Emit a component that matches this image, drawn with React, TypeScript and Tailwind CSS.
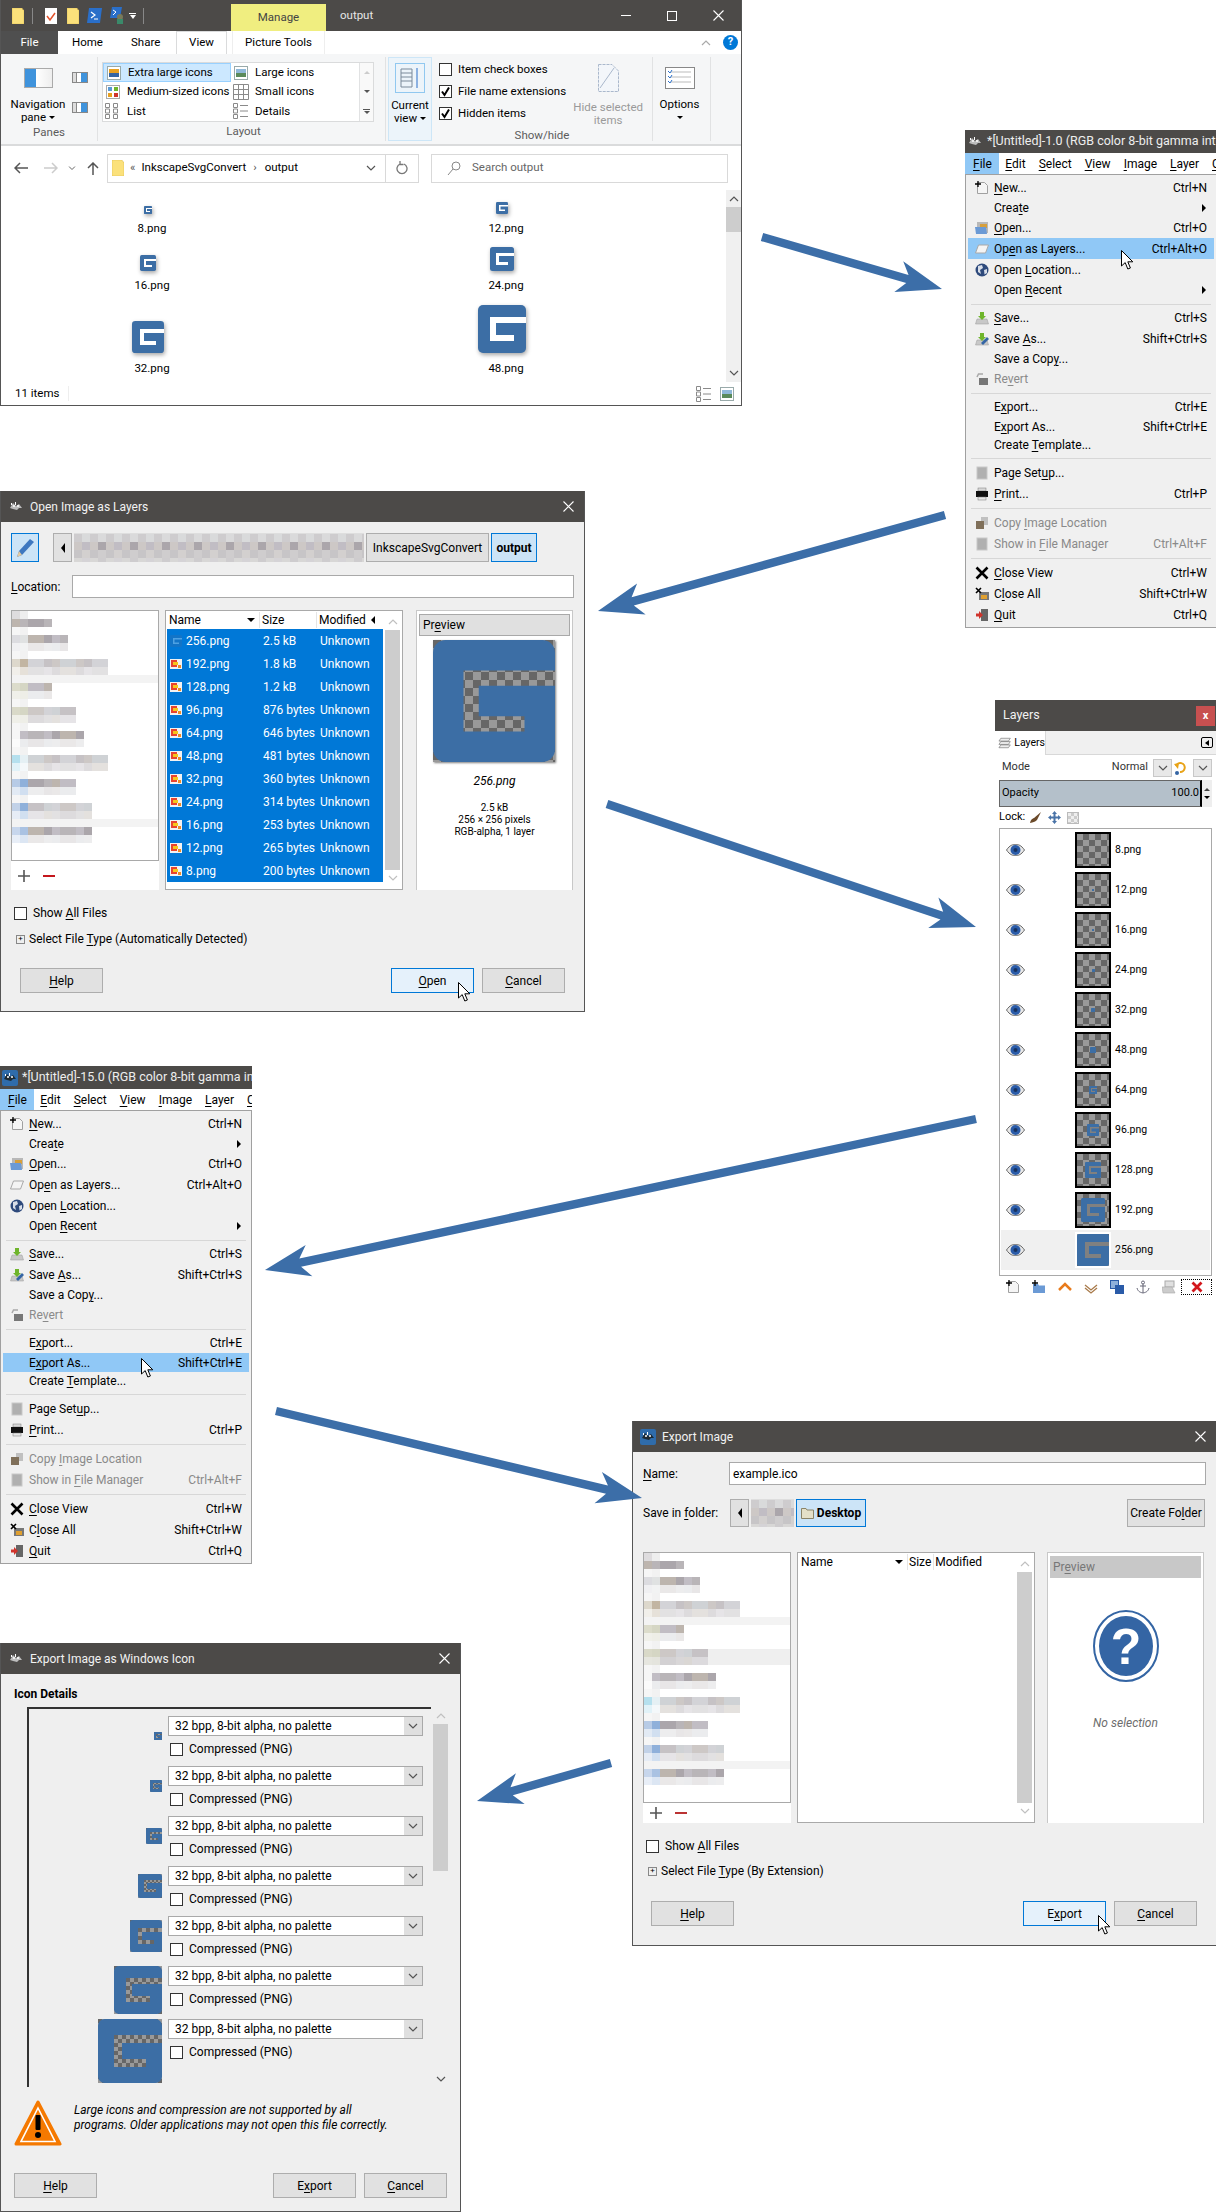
import { useId } from "react";

const TITLE_BG = "bg-[#4c4a48]";

function Mn({ t }: { t: string }) {
    const i = t.indexOf("_");
    if (i < 0) return <span>{t}</span>;
    return (
        <span>
            {t.slice(0, i)}
            <span className="underline underline-offset-2">{t[i + 1]}</span>
            {t.slice(i + 2)}
        </span>
    );
}

function Arrow({ x1, y1, x2, y2 }: { x1: number; y1: number; x2: number; y2: number }) {
    const len = Math.hypot(x2 - x1, y2 - y1);
    const ux = (x2 - x1) / len;
    const uy = (y2 - y1) / len;
    const nx = -uy;
    const ny = ux;
    const pt = (along: number, side: number) =>
        `${x1 + ux * along + nx * side},${y1 + uy * along + ny * side}`;
    const points = [
        pt(0, 4.2),
        pt(len - 36, 4.2),
        pt(len - 45, 16),
        pt(len, 0),
        pt(len - 45, -16),
        pt(len - 36, -4.2),
        pt(0, -4.2),
    ].join(" ");
    return <polygon points={points} fill="#3c6ea8" />;
}

function Cursor({ className }: { className: string }) {
    return (
        <svg width="13" height="20" viewBox="0 0 13 20" className={`absolute z-20 ${className}`}>
            <path d="M.5.5V16L4.2 12.6 6.8 19 9.4 18 6.8 11.8H11.8Z" fill="#fff" stroke="#000" strokeWidth="1" />
        </svg>
    );
}

function Logo({ size, checker = false, cellPx = 8, className = "" }: { size: number; checker?: boolean; cellPx?: number; className?: string }) {
    const id = "chk" + useId().replace(/[^a-zA-Z0-9]/g, "");
    const cell = (cellPx * 48) / size;
    return (
        <svg width={size} height={size} viewBox="0 0 48 48" className={`shrink-0 ${className}`}>
            {checker && (
                <defs>
                    <pattern id={id} width={cell * 2} height={cell * 2} patternUnits="userSpaceOnUse">
                        <rect width={cell * 2} height={cell * 2} fill="#999" />
                        <rect width={cell} height={cell} fill="#666" />
                        <rect x={cell} y={cell} width={cell} height={cell} fill="#666" />
                    </pattern>
                </defs>
            )}
            {checker && <rect width="48" height="48" fill={`url(#${id})`} />}
            <rect width="48" height="48" rx="5" fill="#3c6ea5" />
            <path d="M12 12H48V18H18V30H36V36H12Z" fill={checker ? `url(#${id})` : "#fff"} />
        </svg>
    );
}

function Wilber({ blue = false }: { blue?: boolean }) {
    return (
        <svg width="16" height="16" viewBox="0 0 16 16" className="shrink-0">
            {blue && <rect width="16" height="16" rx="2" fill="#2f6cab" />}
            <path d="M2 9 5 4 8 7 11 5 14 9 11 9 9 11 5 10Z" fill={blue ? "#1d2a33" : "#bdbdbd"} />
            <path d="M3 4h1v2H3zM7 3h1v3H7z" fill="#fff" />
            <circle cx="6" cy="7" r="1" fill="#fff" />
            <circle cx="10" cy="7" r="1" fill="#fff" />
        </svg>
    );
}

function CloseX() {
    return (
        <svg width="11" height="11" viewBox="0 0 11 11">
            <path d="M.5.5 10.5 10.5M10.5.5.5 10.5" stroke="#fff" strokeWidth="1.1" />
        </svg>
    );
}

function Win({ className, title, icon, children }: { className: string; title: string; icon: React.ReactNode; children: React.ReactNode }) {
    return (
        <div className={`absolute flex flex-col border border-t-0 border-[#555] bg-[#efefef] ${className}`}>
            <div className={`flex h-[31px] shrink-0 items-center pl-[7px] pr-[10px] text-[#f2f2f2] ${TITLE_BG}`}>
                {icon}
                <span className="ml-[6px]">{title}</span>
                <span className="ml-auto">
                    <CloseX />
                </span>
            </div>
            {children}
        </div>
    );
}

function Btn({ label, className = "", active = false }: { label: string; className?: string; active?: boolean }) {
    return (
        <div
            className={`flex h-[25px] items-center justify-center border ${
                active ? "border-[#0078d7] bg-[#e5f1fb]" : "border-[#adadad] bg-[#e1e1e1]"
            } ${className}`}
        >
            <Mn t={label} />
        </div>
    );
}

function Check({ on = false }: { on?: boolean }) {
    return (
        <span className="flex h-[13px] w-[13px] shrink-0 items-center justify-center border border-[#333] bg-white">
            {on && (
                <svg width="11" height="11" viewBox="0 0 11 11">
                    <path d="M2 5.5 4.5 9 9 1.5" fill="none" stroke="#000" strokeWidth="2" />
                </svg>
            )}
        </span>
    );
}

function Chevron({ className = "", stroke = "#555" }: { className?: string; stroke?: string }) {
    return (
        <svg width="10" height="6" viewBox="0 0 10 6" className={className}>
            <path d="M1 1 5 5 9 1" fill="none" stroke={stroke} strokeWidth="1.2" />
        </svg>
    );
}

/* pixelated, deliberately blurred-out folder names */
const GREYS = ["#c6c2c5", "#b9b5b8", "#d3d3d7", "#aba6ab", "#cdc8c6", "#bdb5ae", "#cfd2d5", "#c1bdc4"];

function PixelRow({ cols, seed, tint = [], light = false }: { cols: number; seed: number; tint?: string[]; light?: boolean }) {
    const cells = Array.from({ length: cols }, (_, j) => {
        const c = GREYS[(seed * 5 + j * j * 3 + j) % GREYS.length];
        return tint[j] ?? c;
    });
    return (
        <div className={`flex h-[8px] ${light ? "opacity-40" : ""}`}>
            {cells.map((c, j) => (
                <div key={j} className="h-[8px] w-[8px]" style={{ backgroundColor: c }} />
            ))}
        </div>
    );
}

const PLACES = [
    { n: 5, t: [], band: false },
    { n: 7, t: ["#dcdce0", "#e0e2e2"], band: false },
    { n: 12, t: ["#ddd8cc", "#c2b5a2"], band: true },
    { n: 5, t: ["#dcdccb", "#d5d6c4"], band: false },
    { n: 8, t: ["#d9d9c8", "#d5d6c4"], band: false },
    { n: 9, t: ["#f6f6f6"], band: false },
    { n: 12, t: ["#b5e0ee", "#e5f0f4"], band: false },
    { n: 8, t: ["#b7cbe6", "#8fb0da"], band: false },
    { n: 10, t: ["#c2d2e8", "#8fb0da"], band: true },
    { n: 10, t: ["#c7d6ec", "#aac2e2"], band: false },
];

function Places({ active = false }: { active?: boolean }) {
    return (
        <div className="flex h-full w-[148px] shrink-0 flex-col">
            <div className="h-[251px] overflow-hidden border border-[#a9a9a9] bg-white">
                {PLACES.map((p, i) => {
                    if (i === 0) {
                        return (
                            <div key={i}>
                                <PixelRow cols={2} seed={7} tint={["#dedcde", "#eeeeee"]} />
                                <PixelRow cols={5} seed={1} />
                            </div>
                        );
                    }
                    const afterBand = PLACES[i - 1].band;
                    return (
                        <div key={i}>
                            {!afterBand && <PixelRow cols={2} seed={1} tint={["#f6f6f6", "#f2f2f2"]} />}
                            <div className={active && i === 4 ? "bg-[#efefef]" : ""}>
                                <PixelRow cols={p.n} seed={i + 2} tint={p.t} />
                                <PixelRow cols={p.n} seed={i + 5} tint={p.t} light />
                            </div>
                            {p.band && <div className="h-[8px] bg-[#f3f3f3]" />}
                        </div>
                    );
                })}
            </div>
            <div className="flex flex-1 items-center gap-[13px] bg-white pl-[7px]">
                <svg width="12" height="12" viewBox="0 0 12 12">
                    <path d="M6 0V12M0 6H12" stroke="#555" strokeWidth="1.6" />
                </svg>
                <div className={`h-[2px] w-[12px] ${active ? "bg-[#b33]" : "bg-[#c4161c]"}`} />
            </div>
        </div>
    );
}

function PngIcon() {
    return (
        <svg width="12" height="10" viewBox="0 0 12 10" className="shrink-0">
            <rect width="12" height="10" fill="#f2f2f2" />
            <rect x="1" y="1" width="6" height="7" fill="#e8432e" />
            <rect x="3" y="3" width="5" height="3" fill="#f6c51a" />
            <rect x="8" y="6" width="3" height="3" fill="#f08a24" />
        </svg>
    );
}

const FILES = [
    ["256.png", "2.5 kB"],
    ["192.png", "1.8 kB"],
    ["128.png", "1.2 kB"],
    ["96.png", "876 bytes"],
    ["64.png", "646 bytes"],
    ["48.png", "481 bytes"],
    ["32.png", "360 bytes"],
    ["24.png", "314 bytes"],
    ["16.png", "253 bytes"],
    ["12.png", "265 bytes"],
    ["8.png", "200 bytes"],
];

function DialogScroll({ className }: { className: string }) {
    return (
        <div className={`absolute flex w-[15px] flex-col items-center ${className}`}>
            <Chevron className="mt-[6px] mb-[5px] rotate-180" stroke="#c0c0c0" />
            <div className="w-full flex-1 bg-[#cdcdcd]" />
            <Chevron className="mt-[5px] mb-[6px]" stroke="#c0c0c0" />
        </div>
    );
}

function Blurred({ className }: { className: string }) {
    return (
        <div className={`flex flex-col overflow-hidden bg-[#dedede] ${className}`}>
            {[0, 1, 2, 3].map((r) => (
                <div key={r} className={`flex h-[8px] ${r === 0 || r === 3 ? "opacity-30" : r === 2 ? "opacity-60" : ""}`}>
                    {[...Array(37)].map((_, j) => (
                        <div
                            key={j}
                            className="h-[8px] w-[8px] shrink-0"
                            style={{ backgroundColor: GREYS[(r * 3 + j * j + j * 2 + (r === 1 ? 1 : 3)) % GREYS.length] }}
                        />
                    ))}
                </div>
            ))}
        </div>
    );
}

function OpenDialog() {
    return (
        <Win className="left-0 top-[491px] h-[521px] w-[585px]" title="Open Image as Layers" icon={<Wilber />}>
            <div className="flex flex-1 flex-col px-[10px]">
                <div className="mt-[11px] flex h-[29px]">
                    <div className="flex w-[28px] items-center justify-center border border-[#0078d7] bg-[#cce4f7]">
                        <svg width="22" height="22" viewBox="0 0 22 22">
                            <path d="M3 20 5 14 16 2 20 5 8 18Z" fill="#3f78c0" />
                            <path d="M3 20 5 14 8 18Z" fill="#e3c9a0" />
                        </svg>
                    </div>
                    <div className="ml-[14px] flex w-[19px] items-center justify-center border border-[#adadad] bg-[#e1e1e1]">
                        <span className="h-0 w-0 border-y-[5px] border-r-[4px] border-y-transparent border-r-black" />
                    </div>
                    <Blurred className="ml-[2px] w-[290px] pt-[1px]" />
                    <div className="ml-[2px] flex w-[123px] items-center justify-center border border-[#adadad] bg-[#e1e1e1]">
                        InkscapeSvgConvert
                    </div>
                    <div className="ml-[2px] flex w-[46px] items-center justify-center border border-[#0078d7] bg-[#cce4f7] font-bold">
                        output
                    </div>
                </div>
                <div className="mt-[13px] flex h-[23px] items-center">
                    <span className="w-[61px]">
                        <Mn t="_Location:" />
                    </span>
                    <div className="h-full w-[502px] border border-[#a9a9a9] bg-white" />
                </div>
                <div className="mt-[12px] flex h-[280px]">
                    <Places />
                    <div className="relative ml-[6px] w-[238px] border border-[#a9a9a9] bg-white px-px">
                        <div className="flex h-[18px] items-center">
                            <span className="w-[92px] pl-[2px]">Name</span>
                            <span className="ml-[-12px] mr-[4px] h-0 w-0 border-x-[4px] border-t-[4px] border-x-transparent border-t-black" />
                            <span className="w-[57px] border-l border-[#e5e5e5] pl-[2px]">Size</span>
                            <span className="flex items-center border-l border-[#e5e5e5] pl-[2px]">
                                Modified
                                <span className="ml-[5px] h-0 w-0 border-y-[4px] border-r-[4px] border-y-transparent border-r-black" />
                            </span>
                        </div>
                        <div className="w-[216px] bg-[#0078d7] text-white">
                            {FILES.map(([n, s], i) => (
                                <div key={n} className="flex h-[23px] items-center">
                                    <span className="flex w-[96px] items-center gap-[4px] pl-[3px]">
                                        {i === 0 ? <Logo size={12} className="opacity-30" /> : <PngIcon />}
                                        {n}
                                    </span>
                                    <span className="w-[57px]">{s}</span>
                                    <span>Unknown</span>
                                </div>
                            ))}
                        </div>
                        <DialogScroll className="bottom-[2px] right-[2px] top-[2px]" />
                    </div>
                    <div className="ml-[13px] flex w-[157px] flex-col items-center border-x border-t border-[#c8c8c8] bg-white px-[2px] pt-[3px]">
                        <div className="flex h-[22px] w-full items-center border border-[#a9a9a9] bg-[#e0e0e0] pl-[3px]">
                            <Mn t="Pr_eview" />
                        </div>
                        <Logo size={122} checker className="-ml-[2px] mt-[4px] shadow-[1px_1px_2px_rgba(0,0,0,0.5)]" />
                        <span className="mt-[11px] italic">256.png</span>
                        <span className="mt-[13px] text-[10px] leading-[12px]">2.5 kB</span>
                        <span className="text-[10px] leading-[12px]">256 × 256 pixels</span>
                        <span className="text-[10px] leading-[12px]">RGB-alpha, 1 layer</span>
                    </div>
                </div>
                <div className="mt-[15px] flex h-[16px] items-center gap-[6px] pl-[3px]">
                    <Check />
                    <Mn t="Show _All Files" />
                </div>
                <div className="mt-[10px] flex h-[16px] items-center gap-[4px] pl-[5px]">
                    <span className="flex h-[9px] w-[9px] items-center justify-center border border-[#888] text-[8px] leading-none">+</span>
                    <Mn t="Select File _Type (Automatically Detected)" />
                </div>
                <div className="mt-[21px] flex pl-[9px]">
                    <Btn label="_Help" className="w-[83px]" />
                    <Btn label="_Open" className="ml-[288px] w-[83px]" active />
                    <Btn label="_Cancel" className="ml-[8px] w-[83px]" />
                </div>
            </div>
        </Win>
    );
}

function ExportDialog() {
    return (
        <Win className="left-[632px] top-[1421px] h-[525px] w-[585px]" title="Export Image" icon={<Wilber blue />}>
            <div className="flex flex-1 flex-col px-[10px]">
                <div className="mt-[10px] flex h-[23px] items-center">
                    <span className="w-[86px]">
                        <Mn t="_Name:" />
                    </span>
                    <div className="flex h-full w-[477px] items-center border border-[#a9a9a9] bg-white pl-[3px]">example.ico</div>
                </div>
                <div className="mt-[14px] flex h-[28px]">
                    <span className="flex w-[87px] items-center">
                        <Mn t="Save in _folder:" />
                    </span>
                    <div className="flex w-[19px] items-center justify-center border border-[#adadad] bg-[#e1e1e1]">
                        <span className="h-0 w-0 border-y-[5px] border-r-[4px] border-y-transparent border-r-black" />
                    </div>
                    <Blurred className="ml-[2px] w-[43px] pt-[1px]" />
                    <div className="ml-[2px] flex w-[70px] items-center justify-center gap-[3px] border border-[#0078d7] bg-[#cce4f7] font-bold">
                        <svg width="13" height="12" viewBox="0 0 13 12">
                            <path d="M.5 1.5H5L6 3H12.500V11.500H.5Z" fill="#e4e0c8" stroke="#8a8468" />
                        </svg>
                        Desktop
                    </div>
                    <div className="ml-auto mr-px flex w-[78px] items-center justify-center border border-[#adadad] bg-[#e1e1e1]">
                        <Mn t="Create Fo_lder" />
                    </div>
                </div>
                <div className="mt-[25px] flex h-[271px]">
                    <Places active />
                    <div className="relative ml-[6px] w-[238px] border border-[#a9a9a9] bg-white">
                        <div className="flex h-[18px] items-center pl-[3px]">
                            <span className="w-[100px]">Name</span>
                            <span className="ml-[-6px] mr-[4px] h-0 w-0 border-x-[4px] border-t-[4px] border-x-transparent border-t-black" />
                            <span className="mr-px border-l border-[#e5e5e5] pl-[1px] pr-px">Size</span>
                            <span className="border-l border-[#e5e5e5] pl-[1px]">Modified</span>
                        </div>
                        <DialogScroll className="bottom-[2px] right-[2px] top-[2px]" />
                    </div>
                    <div className="ml-[12px] flex w-[157px] flex-col items-center border-x border-t border-[#c8c8c8] bg-white px-[2px] pt-[3px]">
                        <div className="flex h-[22px] w-full items-center bg-[#c8c8c8] pl-[3px] text-[#777]">
                            <Mn t="Pr_eview" />
                        </div>
                        <svg width="66" height="72" viewBox="0 0 66 72" className="mt-[32px]">
                            <ellipse cx="33" cy="36" rx="32" ry="35" fill="#fff" stroke="#3465a4" strokeWidth="2" />
                            <ellipse cx="33" cy="36" rx="27" ry="30" fill="#3465a4" />
                            <text x="33" y="54" textAnchor="middle" fill="#fff" fontFamily="Liberation Sans" fontWeight="700" fontSize="50">
                                ?
                            </text>
                        </svg>
                        <span className="mt-[33px] italic text-[#6d6d6d]">No selection</span>
                    </div>
                </div>
                <div className="mt-[15px] flex h-[16px] items-center gap-[6px] pl-[3px]">
                    <Check />
                    <Mn t="Show _All Files" />
                </div>
                <div className="mt-[9px] flex h-[16px] items-center gap-[4px] pl-[5px]">
                    <span className="flex h-[9px] w-[9px] items-center justify-center border border-[#888] text-[8px] leading-none">+</span>
                    <Mn t="Select File _Type (By Extension)" />
                </div>
                <div className="mt-[22px] flex pl-[8px]">
                    <Btn label="_Help" className="w-[83px]" />
                    <Btn label="E_xport" className="ml-[289px] w-[83px]" active />
                    <Btn label="_Cancel" className="ml-[8px] w-[83px]" />
                </div>
            </div>
        </Win>
    );
}

const ICON_SIZES = [8, 12, 16, 24, 32, 48, 64];

function IconDialog() {
    return (
        <Win className="left-0 top-[1643px] h-[569px] w-[461px]" title="Export Image as Windows Icon" icon={<Wilber />}>
            <div className="flex flex-1 flex-col">
                <div className="ml-[13px] mt-[12px] font-bold leading-[16px]">Icon Details</div>
                <div className="ml-[26px] mt-[5px] flex h-[380px]">
                    <div className="h-full w-[404px] overflow-hidden border-l-2 border-t-2 border-l-[#333] border-t-[#333] pt-[7px]">
                        {ICON_SIZES.map((s, i) => (
                            <div key={s} className={`flex items-start ${i === 6 ? "h-[64px]" : i === 5 ? "h-[53px]" : "h-[50px]"}`}>
                                <div className="flex min-h-[40px] w-[133px] items-center justify-end">
                                    <Logo size={s} checker cellPx={s < 32 ? 2 : 4} />
                                </div>
                                <div className="ml-[6px] w-[255px]">
                                    <div className="flex h-[20px] border border-[#a9a9a9] bg-white">
                                        <span className="flex flex-1 items-center pl-[6px]">32 bpp, 8-bit alpha, no palette</span>
                                        <span className="flex w-[18px] items-center justify-center bg-[#dfdfdf]">
                                            <Chevron />
                                        </span>
                                    </div>
                                    <div className="mt-[6px] flex h-[14px] items-center gap-[6px] pl-[2px]">
                                        <Check />
                                        Compressed (PNG)
                                    </div>
                                </div>
                            </div>
                        ))}
                    </div>
                    <div className="ml-[2px] flex w-[15px] flex-col items-center">
                        <Chevron className="mt-[6px] mb-[5px] rotate-180" stroke="#c0c0c0" />
                        <div className="h-[147px] w-full bg-[#cdcdcd]" />
                        <Chevron className="mb-[5px] mt-auto" stroke="#555" />
                    </div>
                </div>
                <div className="mt-[13px] flex items-start pl-[13px]">
                    <svg width="48" height="48" viewBox="0 0 48 48">
                        <path d="M24 2 46 44H2Z" fill="#f57900" stroke="#f57900" strokeWidth="3" strokeLinejoin="round" />
                        <path d="M24 8 41 41.500H7Z" fill="none" stroke="#fff" strokeWidth="1.600" />
                        <rect x="21.500" y="15" width="5" height="15" rx="1" fill="#000" />
                        <circle cx="24" cy="35" r="3" fill="#000" />
                    </svg>
                    <div className="ml-[12px] mt-[3px] italic leading-[15px]">
                        Large icons and compression are not supported by all
                        <br />
                        programs. Older applications may not open this file correctly.
                    </div>
                </div>
                <div className="mt-[25px] flex pl-[13px]">
                    <Btn label="_Help" className="w-[83px]" />
                    <Btn label="E_xport" className="ml-[176px] w-[83px]" />
                    <Btn label="_Cancel" className="ml-[8px] w-[83px]" />
                </div>
            </div>
        </Win>
    );
}

type MenuRow = { l: string; k?: string; i?: string; sub?: boolean; off?: boolean; h: string } | "sep";

const MENU_ROWS: MenuRow[] = [
    { l: "_New...", k: "Ctrl+N", i: "new", h: "h-[20px]" },
    { l: "Crea_te", sub: true, h: "h-[20px]" },
    { l: "_Open...", k: "Ctrl+O", i: "open", h: "h-[20px]" },
    { l: "Op_en as Layers...", k: "Ctrl+Alt+O", i: "layers", h: "h-[21px]" },
    { l: "Open _Location...", i: "globe", h: "h-[21px]" },
    { l: "Open _Recent", sub: true, h: "h-[20px]" },
    "sep",
    { l: "_Save...", k: "Ctrl+S", i: "save", h: "h-[20px]" },
    { l: "Save _As...", k: "Shift+Ctrl+S", i: "saveas", h: "h-[21px]" },
    { l: "Save a Cop_y...", h: "h-[20px]" },
    { l: "Re_vert", i: "revert", off: true, h: "h-[20px]" },
    "sep",
    { l: "E_xport...", k: "Ctrl+E", h: "h-[20px]" },
    { l: "E_xport As...", k: "Shift+Ctrl+E", h: "h-[19px]" },
    { l: "Create _Template...", h: "h-[18px]" },
    "sep",
    { l: "Page Set_up...", i: "page", h: "h-[21px]" },
    { l: "_Print...", k: "Ctrl+P", i: "print", h: "h-[21px]" },
    "sep",
    { l: "Copy _Image Location", i: "copy", off: true, h: "h-[21px]" },
    { l: "Show in _File Manager", k: "Ctrl+Alt+F", i: "page", off: true, h: "h-[21px]" },
    "sep",
    { l: "_Close View", k: "Ctrl+W", i: "x", h: "h-[21px]" },
    { l: "C_lose All", k: "Shift+Ctrl+W", i: "closeall", h: "h-[21px]" },
    { l: "_Quit", k: "Ctrl+Q", i: "quit", h: "h-[21px]" },
];

function MenuIcon({ name }: { name?: string }) {
    if (!name) return null;
    const box = { width: 14, height: 14, viewBox: "0 0 14 14" };
    switch (name) {
        case "new":
            return (
                <svg {...box}>
                    <path d="M2.500 1.500H9.500L12.500 4.500V12.500H2.500Z" fill="#f5f5f5" stroke="#a0a0a0" />
                    <path d="M3 0V6M0 3H6" stroke="#000" strokeWidth="1.300" />
                </svg>
            );
        case "open":
            return (
                <svg {...box}>
                    <rect x="2" y="1" width="11" height="11" fill="#b8b8b8" />
                    <rect x="5" y="3" width="7" height="4" fill="#d79f3b" />
                    <path d="M0 6H11L12 13H1Z" fill="#6b9ad5" />
                </svg>
            );
        case "layers":
            return (
                <svg {...box}>
                    <path d="M3.500 3H13.500L10.500 11H.5Z" fill="#f4f4f4" stroke="#a8a8a8" />
                </svg>
            );
        case "globe":
            return (
                <svg {...box}>
                    <circle cx="7" cy="7" r="6.500" fill="#2e4a7c" />
                    <path d="M3 3 7 2 8 5 5 7 6 11 3 9ZM9 7 12 6 12 10 9.500 11.500Z" fill="#d8dee8" />
                </svg>
            );
        case "save":
        case "saveas":
            return (
                <svg {...box}>
                    <path d="M2 8H12L13.500 13H.5Z" fill="#c8c8c8" stroke="#9a9a9a" strokeWidth=".5" />
                    <path d="M5 1H9V5H11L7 9 3 5H5Z" fill="#6fb52c" />
                    {name === "saveas" && <path d="M6 11 12 5 14 7 8 13Z" fill="#3465a4" />}
                </svg>
            );
        case "revert":
            return (
                <svg {...box}>
                    <rect x="4" y="6" width="9" height="7" fill="#777" />
                    <path d="M2 5 3.500 2H8" fill="none" stroke="#a8a8a8" strokeWidth="1.500" />
                </svg>
            );
        case "page":
            return (
                <svg {...box}>
                    <rect x="2" y="1" width="10" height="12" fill="#b0b0b0" stroke="#c8c8c8" />
                </svg>
            );
        case "print":
            return (
                <svg {...box}>
                    <rect x="3" y="1" width="8" height="3" fill="#d8d8d8" stroke="#777" strokeWidth=".5" />
                    <rect x="1" y="4" width="12" height="6" fill="#111" />
                    <rect x="3" y="10" width="8" height="3" fill="#e8e8e8" stroke="#777" strokeWidth=".5" />
                </svg>
            );
        case "copy":
            return (
                <svg {...box}>
                    <rect x="6" y="1" width="7" height="8" fill="#c0c0c0" />
                    <rect x="1" y="5" width="8" height="8" fill="#80705a" />
                </svg>
            );
        case "x":
            return (
                <svg {...box}>
                    <path d="M1.500 1.500 12.500 12.500M12.500 1.500 1.500 12.500" stroke="#000" strokeWidth="2.600" />
                </svg>
            );
        case "closeall":
            return (
                <svg {...box}>
                    <rect x="4" y="5" width="10" height="8" fill="#777" />
                    <rect x="6" y="8" width="6" height="4" fill="#e0a030" />
                    <path d="M1 1 6 6M6 1 1 6" stroke="#000" strokeWidth="1.600" />
                </svg>
            );
        default:
            return (
                <svg {...box}>
                    <rect x="6" y="1" width="7" height="12" fill="#666" />
                    <path d="M1 5.500H4V3L8 7 4 11V8.500H1Z" fill="#d0342c" />
                </svg>
            );
    }
}

function GimpMenu({ className, title, blueIcon, activeLabel }: { className: string; title: string; blueIcon?: boolean; activeLabel: string }) {
    return (
        <div className={`absolute flex h-[498px] w-[252px] flex-col overflow-hidden ${className}`}>
            <div className={`flex h-[23px] shrink-0 items-center overflow-hidden whitespace-nowrap pl-[2px] text-[12.5px] text-[#eee] ${TITLE_BG}`}>
                <Wilber blue={blueIcon} />
                <span className="ml-[4px]">{title}</span>
            </div>
            <div className="flex h-[21px] shrink-0 items-center overflow-hidden whitespace-nowrap bg-white">
                <span className="flex h-full items-center bg-[#90c8f6] pl-[8px] pr-[7px]">
                    <Mn t="_File" />
                </span>
                {["_Edit", "_Select", "_View", "_Image", "_Layer", "_Colors"].map((m) => (
                    <span key={m} className="px-[6.500px]">
                        <Mn t={m} />
                    </span>
                ))}
            </div>
            <div className="flex-1 border border-[#a0a0a0] bg-[#f0f0f0] pt-[3px]">
                {MENU_ROWS.map((r, i) => {
                    if (r === "sep") {
                        return (
                            <div key={i} className="flex h-[8px] items-center px-[5px]">
                                <div className="h-px w-full bg-[#d7d7d7]" />
                            </div>
                        );
                    }
                    return (
                        <div
                            key={i}
                            className={`mx-[2px] flex items-center ${r.h} ${r.off ? "text-[#8a8a8a]" : ""} ${r.l === activeLabel ? "bg-[#90c8f6]" : ""}`}
                        >
                            <span className="flex w-[26px] justify-center pl-[2px]">
                                <MenuIcon name={r.i} />
                            </span>
                            <Mn t={r.l} />
                            {r.k && <span className="ml-auto pr-[7px]">{r.k}</span>}
                            {r.sub && (
                                <span className="ml-auto mr-[8px] h-0 w-0 border-y-[4px] border-l-[4px] border-y-transparent border-l-black" />
                            )}
                        </div>
                    );
                })}
            </div>
        </div>
    );
}

function Eye() {
    return (
        <svg width="19" height="12" viewBox="0 0 19 12">
            <path d="M.5 6C4 1 6.500.5 9.500.5S15 1 18.500 6C15 11 12.500 11.500 9.500 11.500S4 11 .5 6Z" fill="#e8e8e8" stroke="#666" />
            <circle cx="9.500" cy="6" r="5" fill="#2a5ba8" />
            <circle cx="9.500" cy="6" r="2" fill="#17325f" />
        </svg>
    );
}

const LAYERS = [
    ["8.png", 0],
    ["12.png", 2],
    ["16.png", 2],
    ["24.png", 3],
    ["32.png", 4],
    ["48.png", 6],
    ["64.png", 8],
    ["96.png", 12],
    ["128.png", 16],
    ["192.png", 24],
    ["256.png", 32],
] as const;

function LayersPanel() {
    return (
        <div className="absolute left-[995px] top-[700px] flex h-[598px] w-[221px] flex-col bg-white text-[11px]">
            <div className={`flex h-[31px] shrink-0 items-center pl-[8px] text-[12.5px] text-[#f2f2f2] ${TITLE_BG}`}>
                Layers
                <span className="ml-auto mr-px flex h-[20px] w-[19px] items-center justify-center bg-[#c75050] text-[11px] font-bold leading-none text-white">x</span>
            </div>
            <div className="flex h-[24px] shrink-0 items-center border-b border-[#d8d8d8] bg-[#f0f0f0]">
                <span className="flex h-[24px] w-[51px] items-center gap-[3px] border-r border-[#d8d8d8] bg-white pl-[3px] text-[10.500px]">
                    <svg width="14" height="12" viewBox="0 0 14 12">
                        <path d="M3 1H13L11 4H1ZM3 4.500H13L11 7.500H1ZM3 8H13L11 11H1Z" fill="#eee" stroke="#777" strokeWidth=".7" />
                    </svg>
                    Layers
                </span>
                <span className="ml-auto mr-[3px] flex h-[11px] w-[12px] items-center justify-center rounded-[2px] border border-black">
                    <span className="h-0 w-0 border-y-[3px] border-r-[4px] border-y-transparent border-r-black" />
                </span>
            </div>
            <div className="flex h-[25px] shrink-0 items-center pl-[7px] pr-[4px]">
                <span className="text-[#333]">Mode</span>
                <span className="ml-auto text-[#333]">Normal</span>
                <span className="ml-[5px] flex h-[18px] w-[19px] items-center justify-center border border-[#c8c8c8] bg-[#e8e8e8]">
                    <Chevron />
                </span>
                <svg width="13" height="14" viewBox="0 0 13 14" className="ml-[2px]">
                    <path d="M2 5A4.500 4.500 0 1 1 6 11" fill="none" stroke="#e8a317" strokeWidth="2" />
                    <path d="M0 3 5 2 4 8Z" fill="#e8a317" />
                    <circle cx="3" cy="12" r="2" fill="#3465a4" />
                </svg>
                <span className="ml-[6px] flex h-[18px] w-[19px] items-center justify-center border border-[#c8c8c8] bg-[#e8e8e8]">
                    <Chevron />
                </span>
            </div>
            <div className="ml-[4px] flex h-[27px] w-[213px] shrink-0">
                <div className="flex flex-1 items-center justify-between border border-[#666] border-r-[2px] border-r-black bg-[#b4c0ca] pl-[2px] pr-px">
                    <span>Opacity</span>
                    <span>100.0</span>
                </div>
                <div className="flex w-[10px] flex-col items-center justify-center gap-[5px] bg-[#eee]">
                    <span className="h-0 w-0 border-x-[3px] border-b-[3px] border-x-transparent border-b-[#444]" />
                    <span className="h-0 w-0 border-x-[3px] border-t-[3px] border-x-transparent border-t-black" />
                </div>
            </div>
            <div className="flex h-[21px] shrink-0 items-center pl-[4px]">
                <span>Lock:</span>
                <svg width="13" height="13" viewBox="0 0 13 13" className="ml-[4px]">
                    <path d="M1 12C2 8 3 8 5 7L12 1 8 9C6 11 4 11 1 12Z" fill="#6b4a2a" />
                </svg>
                <svg width="13" height="13" viewBox="0 0 13 13" className="ml-[6px]">
                    <path d="M6.500 0 9 3H7.500V5.500H10V4L13 6.500 10 9V7.500H7.500V10H9L6.500 13 4 10H5.500V7.500H3V9L0 6.500 3 4V5.500H5.500V3H4Z" fill="#4a74a8" />
                </svg>
                <span className="ml-[6px] h-[12px] w-[12px] border border-[#bbb] bg-[conic-gradient(#ccc_25%,#eee_0_50%,#ccc_0_75%,#eee_0)] bg-size-[6px_6px]" />
            </div>
            <div className="ml-[4px] h-[448px] w-[213px] shrink-0 border border-[#a9a9a9] pt-px">
                {LAYERS.map(([name, size]) => {
                    const sel = name === "256.png";
                    return (
                        <div key={name} className={`mx-px flex h-[40px] items-center ${sel ? "bg-[#f0f0f0]" : ""}`}>
                            <span className="ml-[5px] flex w-[69px]">
                                <Eye />
                            </span>
                            <span
                                className={`flex h-[36px] w-[36px] shrink-0 items-center justify-center border-2 ${
                                    sel ? "border-white" : "border-black"
                                } bg-[conic-gradient(#666_25%,#999_0_50%,#666_0_75%,#999_0)] bg-size-[12px_12px]`}
                            >
                                {size > 0 && (
                                    <svg width={size} height={size} viewBox="0 0 48 48" className="shrink-0">
                                        <rect width="48" height="48" rx="3" fill="#3c6ea5" />
                                        {size >= 8 && <path d="M12 12H48V18H18V30H36V36H12Z" fill="#808080" />}
                                    </svg>
                                )}
                            </span>
                            <span className="ml-[4px] text-[10.500px]">{name}</span>
                        </div>
                    );
                })}
            </div>
            <div className="flex flex-1 items-center pl-[11px]">
                <LayerTools />
            </div>
        </div>
    );
}

function LayerTools() {
    return (
        <div className="flex items-center gap-[12px]">
            <svg width="14" height="14" viewBox="0 0 14 14">
                <path d="M2.500 1.500H9.500L12.500 4.500V12.500H2.500Z" fill="#f5f5f5" stroke="#a0a0a0" />
                <path d="M3 0V6M0 3H6" stroke="#000" strokeWidth="1.300" />
            </svg>
            <svg width="14" height="14" viewBox="0 0 14 14">
                <path d="M1 4H6L7 5.500H13V13H1Z" fill="#6b9ad5" />
                <path d="M3 0V6M0 3H6" stroke="#000" strokeWidth="1.300" />
            </svg>
            <svg width="14" height="14" viewBox="0 0 14 14">
                <path d="M1 10 7 4 13 10" fill="none" stroke="#e87b1c" strokeWidth="2.500" />
            </svg>
            <svg width="14" height="14" viewBox="0 0 14 14">
                <path d="M1 5 7 10 13 5M1 8 7 13 13 8" fill="none" stroke="#a87a4a" strokeWidth="1.300" />
            </svg>
            <svg width="14" height="14" viewBox="0 0 14 14">
                <rect x=".5" y=".5" width="8" height="8" fill="#8fb0da" stroke="#2a5ba8" />
                <rect x="5" y="5" width="9" height="9" fill="#2a5ba8" />
            </svg>
            <svg width="14" height="14" viewBox="0 0 14 14">
                <circle cx="7" cy="2.500" r="1.500" fill="none" stroke="#667" />
                <path d="M7 4V13M4 6H10M1 8C2 12 5 12.500 7 13 9 12.500 12 12 13 8" fill="none" stroke="#667" />
            </svg>
            <svg width="14" height="14" viewBox="0 0 14 14">
                <rect x="3" y="1" width="9" height="6" fill="#e0e0e0" stroke="#aaa" />
                <path d="M0 7H10L13 13H1Z" fill="#ccc" stroke="#aaa" strokeWidth=".6" />
            </svg>
            <span className="-ml-[7px] flex h-[16px] w-[31px] items-center justify-center border border-dotted border-black">
                <svg width="12" height="12" viewBox="0 0 12 12">
                    <path d="M1.500 1.500 10.500 10.500M10.500 1.500 1.500 10.500" stroke="#d3171c" strokeWidth="2.800" />
                </svg>
            </span>
        </div>
    );
}

function FolderGlyph({ w = 12, h = 16 }: { w?: number; h?: number }) {
    return (
        <svg width={w} height={h} viewBox="0 0 12 16">
            <path d="M0 0H10L11 2H12V16H0Z" fill="#fbe17b" stroke="#d8b84c" strokeWidth=".5" />
        </svg>
    );
}

function LabelGroup({ text }: { text: string }) {
    return <div className="flex h-[18px] shrink-0 items-center justify-center text-[#5c5c5c]">{text}</div>;
}

function ExplorerTitle() {
    return (
        <div className={`flex h-[31px] shrink-0 ${TITLE_BG}`}>
            <div className="flex w-[230px] items-center pl-[11px]">
                <FolderGlyph />
                <span className="ml-[8px] h-[16px] w-px bg-[#888]" />
                <svg width="12" height="16" viewBox="0 0 12 16" className="ml-[12px]">
                    <rect width="12" height="16" fill="#fff" />
                    <path d="M2 8 5 12 10 5" fill="none" stroke="#e2522a" strokeWidth="1.500" />
                </svg>
                <span className="ml-[10px]">
                    <FolderGlyph />
                </span>
                <svg width="15" height="15" viewBox="0 0 15 15" className="ml-[8px]">
                    <path d="M2 0H15L13 15H0Z" fill="#2a6fc9" />
                    <path d="M4 4 8 7 4 10M7 11H11" fill="none" stroke="#fff" strokeWidth="1.200" />
                </svg>
                <svg width="14" height="17" viewBox="0 0 14 17" className="ml-[8px]">
                    <path d="M2 0H12L10 11H0Z" fill="#2a6fc9" />
                    <path d="M3 3 6 5 3 8" fill="none" stroke="#fff" />
                    <circle cx="10" cy="10" r="3" fill="#7a7a5a" />
                    <rect x="7" y="12" width="6" height="5" fill="#3a8a6a" />
                </svg>
                <span className="ml-[5px] flex flex-col items-center gap-px">
                    <span className="h-px w-[7px] bg-white" />
                    <span className="h-0 w-0 border-x-[3px] border-t-[4px] border-x-transparent border-t-white" />
                </span>
                <span className="ml-[7px] h-[16px] w-px bg-[#888]" />
            </div>
            <div className="flex h-[27px] w-[95px] items-center justify-center self-end bg-[#f0ee80] text-[#444]">Manage</div>
            <span className="ml-[14px] flex items-center text-[#e6e6e6]">output</span>
            <div className="ml-auto flex items-center text-white">
                <span className="flex w-[46px] justify-center">
                    <span className="h-px w-[10px] bg-white" />
                </span>
                <span className="flex w-[46px] justify-center">
                    <span className="h-[10px] w-[10px] border border-white" />
                </span>
                <span className="flex w-[46px] justify-center">
                    <CloseX />
                </span>
            </div>
        </div>
    );
}

function ViewIcon({ kind }: { kind: string }) {
    if (kind === "xl" || kind === "l") {
        return (
            <svg width="14" height="14" viewBox="0 0 14 14">
                <rect x=".5" y=".5" width="13" height="13" fill="#fff" stroke="#9aa" />
                <rect x="2" y="3" width="10" height="8" fill={kind === "xl" ? "#e8a020" : "#8fb8d8"} />
                <rect x="2" y="7" width="10" height="4" fill={kind === "xl" ? "#3465a4" : "#5a8a5a"} />
            </svg>
        );
    }
    if (kind === "med") {
        return (
            <svg width="14" height="14" viewBox="0 0 14 14">
                <rect x=".5" y=".5" width="13" height="13" fill="#fff" stroke="#aaa" />
                <rect x="2" y="2" width="4" height="4" fill="#5a9ad5" />
                <rect x="8" y="2" width="4" height="4" fill="#6fb52c" />
                <rect x="2" y="8" width="4" height="4" fill="#e8a020" />
                <rect x="8" y="8" width="4" height="4" fill="#d0342c" />
            </svg>
        );
    }
    const dots = kind === "small";
    return (
        <svg width="16" height="16" viewBox="0 0 16 16" fill="none" stroke="#8a8a8a" strokeWidth="1">
            {dots ? (
                <path d="M.5.5H15.500V15.500H.5ZM5.500.5V15.500M10.500.5V15.500M.5 5.500H15.500M.5 10.500H15.500" />
            ) : kind === "list" ? (
                <path d="M.5.5H4.500V4.500H.5ZM.5 6H4.500V10H.5ZM.5 11.500H4.500V15.500H.5ZM8.500.5H12.500V4.500H8.500ZM8.500 6H12.500V10H8.500ZM8.500 11.500H12.500V15.500H8.500Z" />
            ) : (
                <path d="M.5.5H4.500V4.500H.5ZM.5 6H4.500V10H.5ZM.5 11.500H4.500V15.500H.5ZM7 2.500H15M7 8H15M7 13.500H15" />
            )}
        </svg>
    );
}

function Ribbon() {
    return (
        <div className="flex h-[92px] shrink-0 border-b-2 border-[#dadbdc] bg-[#f5f6f7]">
            <div className="my-[3px] flex w-[97px] flex-col border-r border-[#e1e2e3]">
                <div className="flex flex-1 pl-[9px] pt-[11px]">
                    <div className="flex w-[56px] flex-col items-center leading-[13px]">
                        <div className="flex h-[20px] w-[29px] overflow-hidden border border-[#aaa] bg-white">
                            <span className="w-[11px] bg-[#3f93dc]" />
                            <span className="flex-1 bg-linear-to-r from-white to-[#eee]" />
                        </div>
                        <span className="mt-[10px]">Navigation</span>
                        <span className="flex items-center gap-[3px]">
                            pane
                            <span className="h-0 w-0 border-x-[3px] border-t-[3px] border-x-transparent border-t-black" />
                        </span>
                    </div>
                    <div className="ml-[6px] flex flex-col gap-[19px] pt-[4px]">
                        {[0, 1].map((i) => (
                            <div key={i} className="flex h-[11px] w-[16px] border border-[#888] bg-white">
                                <span className="w-[4px] border-r border-[#888] bg-[#ddd]" />
                                <span className="ml-auto w-[6px] bg-[#3f93dc]" />
                            </div>
                        ))}
                    </div>
                </div>
                <LabelGroup text="Panes" />
            </div>
            <div className="my-[3px] flex w-[288px] flex-col border-r border-[#e1e2e3] pl-[4px]">
                <div className="flex flex-1 pt-[5px]">
                    <div className="grid h-[60px] w-[272px] grid-cols-[128px_1fr_14px] grid-rows-3 border border-[#dadbdc] bg-white">
                        {[
                            ["xl", "Extra large icons"],
                            ["l", "Large icons"],
                            ["med", "Medium-sized icons"],
                            ["small", "Small icons"],
                            ["list", "List"],
                            ["details", "Details"],
                        ].flatMap(([k, t], i) => {
                            const cell = (
                                <div
                                    key={t}
                                    className={`flex items-center gap-[6px] whitespace-nowrap pl-[2px] ${
                                        k === "xl" ? "border border-[#99d1ff] bg-[#cce8ff]" : ""
                                    }`}
                                >
                                    <span className="flex w-[16px] justify-center">
                                        <ViewIcon kind={k} />
                                    </span>
                                    {t}
                                </div>
                            );
                            if (i % 2 === 0) return [cell];
                            return [
                                cell,
                                <div key={t + "s"} className="flex items-center justify-center border-l border-[#e1e2e3] bg-[#f9f9f9]">
                                    {i === 1 && <span className="h-0 w-0 border-x-[3px] border-b-[3px] border-x-transparent border-b-[#ccc]" />}
                                    {i === 3 && <span className="h-0 w-0 border-x-[3px] border-t-[3px] border-x-transparent border-t-[#555]" />}
                                    {i === 5 && (
                                        <span className="flex flex-col items-center gap-px">
                                            <span className="h-px w-[7px] bg-[#555]" />
                                            <span className="h-0 w-0 border-x-[3px] border-t-[3px] border-x-transparent border-t-[#555]" />
                                        </span>
                                    )}
                                </div>,
                            ];
                        })}
                    </div>
                </div>
                <LabelGroup text="Layout" />
            </div>
            <div className="my-[3px] ml-[2px] flex w-[44px] flex-col items-center border border-[#cde6f7] bg-[#ecf4fa] pt-[5px] leading-[13px]">
                <div className="flex h-[30px] w-[30px] items-center justify-center border border-[#90c8f0]">
                    <svg width="20" height="22" viewBox="0 0 20 22" fill="none" stroke="#7a8a9a">
                        <path d="M1 2H12V20H1ZM1 6H12M1 10H12M1 14H12" />
                        <path d="M17 1V21" stroke="#2a6fc9" />
                    </svg>
                </div>
                <span className="mt-[6px]">Current</span>
                <span className="flex items-center gap-[3px]">
                    view
                    <span className="h-0 w-0 border-x-[3px] border-t-[3px] border-x-transparent border-t-black" />
                </span>
            </div>
            <div className="my-[3px] flex w-[221px] flex-col border-r border-[#e1e2e3]">
                <div className="flex flex-1">
                    <div className="flex flex-col gap-[9px] pl-[7px] pt-[6px]">
                        {[
                            ["Item check boxes", false],
                            ["File name extensions", true],
                            ["Hidden items", true],
                        ].map(([t, on]) => (
                            <div key={t as string} className="flex h-[13px] items-center gap-[6px] whitespace-nowrap">
                                <Check on={on as boolean} />
                                {t}
                            </div>
                        ))}
                    </div>
                    <div className="ml-[7px] flex w-[70px] flex-col items-center pt-[7px] leading-[13px] text-[#9a9a9a]">
                        <svg width="21" height="28" viewBox="0 0 21 28" fill="#f3f6fa" stroke="#aab8cc">
                            <path d="M.5.5H14L20.500 7V27.500H.5Z" strokeDasharray="3 1" />
                            <path d="M2 24 16 4" />
                        </svg>
                        <span className="mt-[9px] whitespace-nowrap">Hide selected</span>
                        <span>items</span>
                    </div>
                </div>
                <LabelGroup text="Show/hide" />
            </div>
            <div className="my-[3px] flex w-[58px] flex-col items-center border-r border-[#e1e2e3] pr-[4px] pt-[10px] leading-[13px]">
                <svg width="30" height="22" viewBox="0 0 30 22" fill="none">
                    <rect x=".5" y=".5" width="29" height="21" fill="#fff" stroke="#888" />
                    <path d="M6 5H26M6 10H26M6 15H26" stroke="#bbb" />
                    <path d="M3 4 5 6 7 3M3 9 5 11 7 8M3 14 5 16 7 13" stroke="#2a6fc9" />
                </svg>
                <span className="mt-[9px]">Options</span>
                <span className="mt-[5px] h-0 w-0 border-x-[3px] border-t-[3px] border-x-transparent border-t-black" />
            </div>
        </div>
    );
}

function Explorer() {
    return (
        <div className="absolute left-0 top-0 flex h-[406px] w-[742px] flex-col border border-t-0 border-[#555] bg-white text-[11.500px]">
            <ExplorerTitle />
            <div className="flex h-[23px] shrink-0 items-center bg-white">
                <span className="flex h-full w-[57px] items-center justify-center bg-[#4f4f4f] text-white">File</span>
                <span className="w-[59px] pl-[14px]">Home</span>
                <span className="w-[59px] pl-[14px]">Share</span>
                <span className="flex h-full w-[51px] items-center justify-center border-x border-t border-[#dadbdc]">View</span>
                <span className="ml-[5px] flex h-full w-[93px] items-center justify-center border-x border-[#eee]">Picture Tools</span>
                <Chevron className="ml-auto rotate-180" stroke="#aaa" />
                <span className="ml-[12px] mr-[3px] flex h-[15px] w-[15px] items-center justify-center rounded-full bg-[#0078d7] text-[11px] font-bold text-white">?</span>
            </div>
            <Ribbon />
            <div className="flex h-[44px] shrink-0 items-center">
                <svg width="14" height="12" viewBox="0 0 14 12" className="ml-[13px]" fill="none" stroke="#555" strokeWidth="1.500">
                    <path d="M6 1 1 6 6 11M1 6H14" />
                </svg>
                <svg width="14" height="12" viewBox="0 0 14 12" className="ml-[16px]" fill="none" stroke="#ccc" strokeWidth="1.500">
                    <path d="M8 1 13 6 8 11M13 6H0" />
                </svg>
                <Chevron className="ml-[9px] scale-75" />
                <svg width="12" height="13" viewBox="0 0 12 13" className="ml-[10px]" fill="none" stroke="#555" strokeWidth="1.500">
                    <path d="M1 6 6 1 11 6M6 1V13" />
                </svg>
                <div className="ml-[8px] flex h-[29px] w-[312px] items-center border border-[#d9d9d9]">
                    <span className="ml-[4px]">
                        <FolderGlyph />
                    </span>
                    <span className="ml-[6px] text-[#555]">«</span>
                    <span className="ml-[6px]">InkscapeSvgConvert</span>
                    <span className="ml-[7px] text-[#555]">›</span>
                    <span className="ml-[8px]">output</span>
                    <Chevron className="ml-auto" />
                    <span className="ml-[9px] h-full w-px bg-[#d9d9d9]" />
                    <svg width="12" height="14" viewBox="0 0 12 14" className="mx-[10px]" fill="none" stroke="#777" strokeWidth="1.300">
                        <path d="M8 3A5 5 0 1 1 4 3M4 0V3.500H7.500" />
                    </svg>
                </div>
                <div className="ml-[12px] flex h-[29px] w-[297px] items-center border border-[#d9d9d9] pl-[15px] text-[#666]">
                    <svg width="14" height="15" viewBox="0 0 14 15" fill="none" stroke="#888">
                        <circle cx="9" cy="5" r="4" />
                        <path d="M6 8 1 14" />
                    </svg>
                    <span className="ml-[11px]">Search output</span>
                </div>
            </div>
            <div className="relative flex min-h-0 flex-1">
                <div className="grid flex-1 grid-cols-[302px_1fr] grid-rows-[46px_57px_83px]">
                    {[
                        [8, "8.png"],
                        [12, "12.png"],
                        [16, "16.png"],
                        [24, "24.png"],
                        [32, "32.png"],
                        [48, "48.png"],
                    ].map(([s, t], i) => (
                        <div key={t} className={`flex flex-col items-center justify-end ${i % 2 === 0 ? "" : "w-[302px] ml-[52px]"}`}>
                            <Logo size={s as number} className="drop-shadow-[1px_2px_2px_rgba(0,0,0,0.35)] -translate-x-[4px]" />
                            <span className={`${i >= 4 ? "mt-[7px]" : "mt-[6px]"} leading-[16px]`}>{t}</span>
                        </div>
                    ))}
                </div>
                <div className="flex w-[15px] flex-col items-center bg-[#f0f0f0]">
                    <Chevron className="mb-[6px] mt-[6px] rotate-180" />
                    <div className="mt-[-1px] h-[25px] w-full bg-[#cdcdcd]" />
                    <Chevron className="mb-[6px] mt-auto" />
                </div>
            </div>
            <div className="flex h-[23px] shrink-0 items-center pl-[14px] pr-[7px]">
                <span className="w-[54px] border-r border-[#eee]">11 items</span>
                <span className="ml-auto">
                    <ViewIcon kind="details" />
                </span>
                <span className="ml-[8px]">
                    <ViewIcon kind="l" />
                </span>
            </div>
        </div>
    );
}

export default function App() {
    return (
        <div className="relative h-[2212px] w-[1216px] overflow-hidden bg-white font-[Roboto,sans-serif] text-xs text-black">
            <Explorer />
            <GimpMenu className="left-[965px] top-[130px]" title="*[Untitled]-1.0 (RGB color 8-bit gamma integer, GIMP built-in sRGB, 1 layer)" activeLabel="Op_en as Layers..." />
            <OpenDialog />
            <LayersPanel />
            <GimpMenu className="left-0 top-[1066px]" title="*[Untitled]-15.0 (RGB color 8-bit gamma integer, GIMP built-in sRGB, 11 layers)" blueIcon activeLabel="E_xport As..." />
            <ExportDialog />
            <IconDialog />
            <Cursor className="left-[1121px] top-[250px]" />
            <Cursor className="left-[458px] top-[982px]" />
            <Cursor className="left-[141px] top-[1358px]" />
            <Cursor className="left-[1098px] top-[1915px]" />
            <svg width="1216" height="2212" className="pointer-events-none absolute left-0 top-0">
                <Arrow x1={762} y1={237} x2={942} y2={289} />
                <Arrow x1={945} y1={515} x2={598} y2={611} />
                <Arrow x1={607} y1={804} x2={976} y2={927} />
                <Arrow x1={976} y1={1119} x2={265} y2={1270} />
                <Arrow x1={276} y1={1411} x2={642} y2={1498} />
                <Arrow x1={611} y1={1763} x2={477} y2={1801} />
            </svg>
        </div>
    );
}
